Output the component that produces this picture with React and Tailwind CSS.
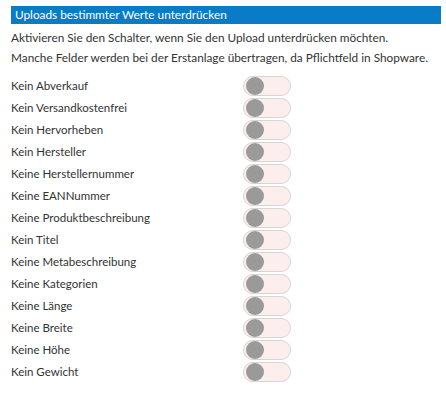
import React from "react";

const rows = [
  "Kein Abverkauf",
  "Kein Versandkostenfrei",
  "Kein Hervorheben",
  "Kein Hersteller",
  "Keine Herstellernummer",
  "Keine EANNummer",
  "Keine Produktbeschreibung",
  "Kein Titel",
  "Keine Metabeschreibung",
  "Keine Kategorien",
  "Keine Länge",
  "Keine Breite",
  "Keine Höhe",
  "Kein Gewicht",
];

export default function App() {
  return (
    <div
      className="w-[446px] h-[401px] bg-white text-[#333] pt-[6px]"
      style={{ fontFamily: "Lato, 'Open Sans', sans-serif" }}
    >
      <div className="ml-[11px] w-[430px] h-[18px] bg-[#0a7bc6] text-white text-[11.8px] leading-[18px] pl-[4px]">
        Uploads bestimmter Werte unterdrücken
      </div>
      <div className="pl-[11px] pt-[4px] text-[11.8px] leading-[20px]">
        <div>Aktivieren Sie den Schalter, wenn Sie den Upload unterdrücken möchten.</div>
        <div>Manche Felder werden bei der Erstanlage übertragen, da Pflichtfeld in Shopware.</div>
      </div>
      <div className="pl-[11px] pt-[7px] flex flex-col">
        {rows.map((r) => (
          <div key={r} className="flex items-center h-[22px]">
            <div className="w-[232px] text-[11.5px]">{r}</div>
            <div className="w-[48px] h-[20px] rounded-full bg-[#fdeeee] border border-[#d8d4d4] flex items-center pl-[2px]">
              <div className="w-[18px] h-[18px] rounded-full bg-[#9a9a9a]" />
            </div>
          </div>
        ))}
      </div>
    </div>
  );
}
